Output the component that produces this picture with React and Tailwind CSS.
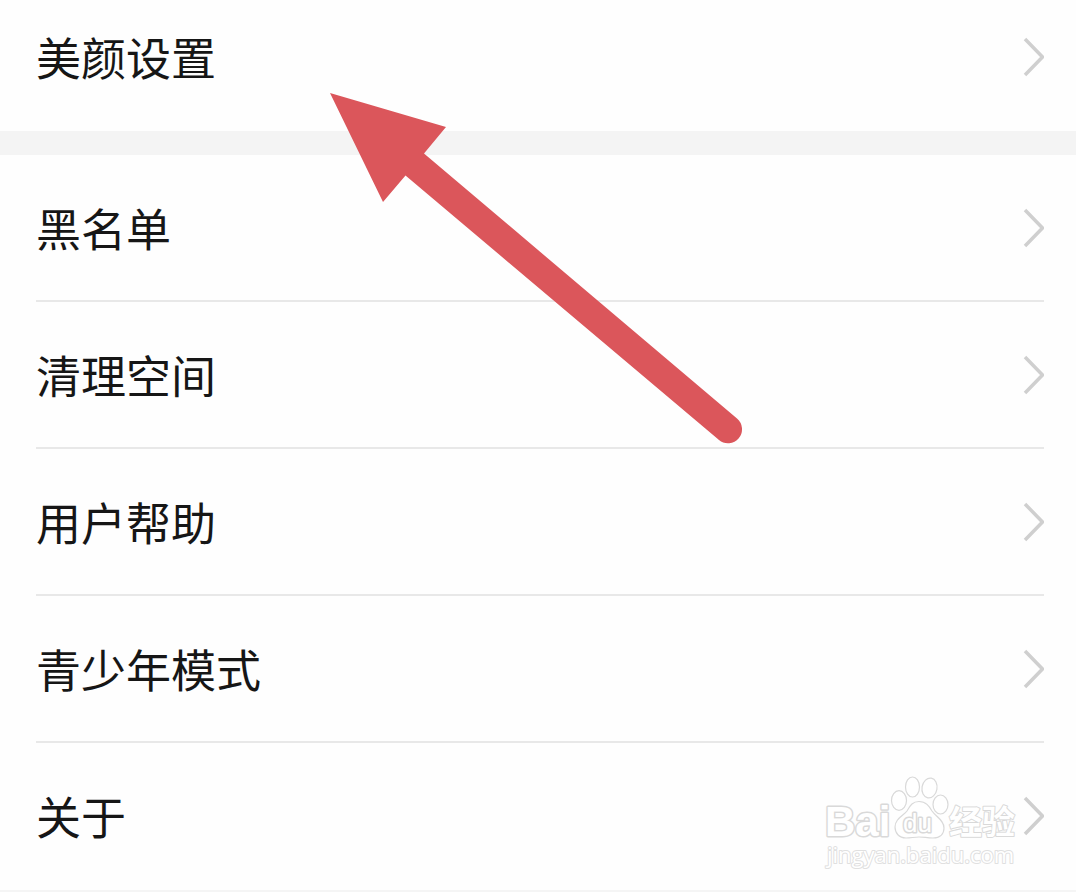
const groups = [
  ["美颜设置"],
  ["黑名单", "清理空间", "用户帮助", "青少年模式", "关于"],
];

function Chevron() {
  return (
    <svg
      className="h-10 w-6 shrink-0"
      viewBox="0 0 24 40"
      fill="none"
      stroke="#cfcfcf"
      strokeWidth="3.500"
      aria-hidden="true"
    >
      <path d="M5 2 22.500 20 5 38" />
    </svg>
  );
}

function Row({ label, first, last }) {
  return (
    <li className={first ? "pr-8 pb-4 pl-9" : "pr-8 pl-9"}>
      <a
        href="#"
        className={
          "flex items-center justify-between border-b-2 " +
          (first ? "h-[115px] " : "h-[147px] ") +
          (first || last ? "border-transparent" : "border-[#e8e8e8]")
        }
      >
        <span className="text-[45px] leading-[60px] text-[#161616]">
          {label}
        </span>
        <Chevron />
      </a>
    </li>
  );
}

function Arrow() {
  return (
    <svg
      className="pointer-events-none absolute top-[93px] left-[330px] h-[352px] w-[414px]"
      viewBox="330 93 414 352"
      aria-hidden="true"
    >
      <path
        fill="#db565b"
        d="M330 93 446 127 424 153.500 737 418.500A14 14 0 0 1 719 440L405.500 175.500 383 202Z"
      />
    </svg>
  );
}

function Watermark() {
  return (
    <svg
      className="pointer-events-none absolute top-[770px] right-[52px] h-[104px] w-[204px]"
      viewBox="820 770 204 104"
      fill="#ffffff"
      stroke="#d9d9d9"
      strokeWidth="1.200"
      strokeLinejoin="round"
    >
      <text
        x="825"
        y="836"
        fontSize="42"
        strokeWidth="3"
        paintOrder="stroke"
        className="font-['Liberation_Sans',sans-serif] font-bold"
      >
        Bai
      </text>
      <text
        x="949"
        y="834"
        fontSize="33"
        strokeWidth="2"
        paintOrder="stroke"
        className="font-['Noto_Sans_CJK_SC',sans-serif] font-bold"
      >
        经验
      </text>
      <ellipse cx="899" cy="800.500" rx="7.500" ry="9.800" />
      <ellipse cx="912.500" cy="787" rx="7" ry="10" />
      <ellipse cx="929.500" cy="788" rx="7.500" ry="10" transform="rotate(10 929.500 788)" />
      <ellipse cx="940.500" cy="804.500" rx="7.500" ry="9.500" />
      <path d="M919 801.500C926 801.500 929 806 932 811C936 817 944 820 944 828C944 834 940 838 933 838C927 838 924 837 919 837C914 837 911 838 906 838C899 838 895 833 895 827C895 819 903 816 907 811C910 806 912 801.500 919 801.500Z" />
      <text
        x="903"
        y="832"
        fontSize="26"
        strokeWidth="3"
        paintOrder="stroke"
        className="font-['Liberation_Sans',sans-serif]"
      >
        du
      </text>
      <text
        x="827"
        y="863"
        fontSize="22"
        strokeWidth="2"
        stroke="#e0e0e0"
        paintOrder="stroke"
        className="font-['Open_Sans',sans-serif]"
      >
        jingyan.baidu.com
      </text>
    </svg>
  );
}

export default function App() {
  return (
    <main className="relative min-h-screen overflow-hidden bg-[#fefefe] font-['Noto_Sans_CJK_SC',sans-serif]">
      {groups.map((labels, g) => (
        <ul
          key={g}
          className={
            g === 0
              ? "border-b-[24px] border-[#f4f4f4]"
              : "border-b-4 border-[#f5f5f5]"
          }
        >
          {labels.map((label, i) => (
            <Row
              key={label}
              label={label}
              first={g === 0}
              last={i === labels.length - 1}
            />
          ))}
        </ul>
      ))}
      <Arrow />
      <Watermark />
    </main>
  );
}
